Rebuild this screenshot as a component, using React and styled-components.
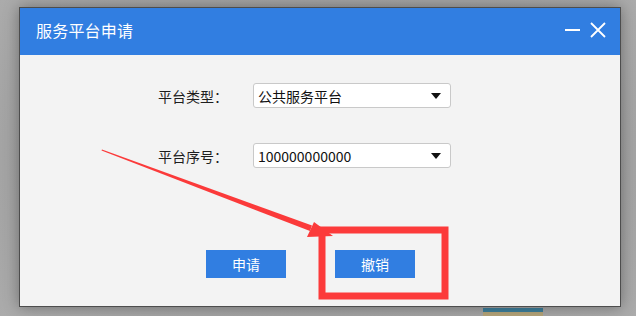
import React from "react";
import styled, { createGlobalStyle } from "styled-components";

const GlobalStyle = createGlobalStyle`
  html, body {
    margin: 0;
    padding: 0;
    background: #a7a7a7;
    font-family: "Noto Sans CJK SC", "Noto Sans", sans-serif;
  }
`;

const Page = styled.div`
  position: relative;
  width: 636px;
  height: 316px;
  overflow: hidden;
  padding: 7px 0 0 19px;
  box-sizing: border-box;
  background: radial-gradient(ellipse at 50% 50%, #8f8f8f 0%, #a4a4a4 70%, #ababab 100%);
`;

const Dialog = styled.div`
  width: 602px;
  height: 300px;
  box-sizing: border-box;
  border: 1px solid #4d4d4d;
  background: #f3f3f3;
  box-shadow: 0 0 14px rgba(0, 0, 0, 0.35);
  display: flex;
  flex-direction: column;
  position: relative;
  z-index: 1;
`;

const TitleBar = styled.div`
  height: 47px;
  background: #317ee1;
  display: flex;
  align-items: center;
  padding: 0 14px 0 16px;
  color: #fff;
`;

const Title = styled.div`
  flex: 1;
  font-size: 16px;
  letter-spacing: 0.2px;
  margin-top: -3px;
`;

const Controls = styled.div`
  display: flex;
  align-items: center;
  gap: 10px;
  margin-top: -3px;
`;

const Body = styled.div`
  flex: 1;
  display: flex;
  flex-direction: column;
  padding: 28px 0 0 138px;
`;

const Row = styled.div`
  display: flex;
  align-items: center;
  height: 25px;
  margin-bottom: ${(p) => p.$gap}px;
`;

const Label = styled.div`
  width: 95px;
  font-size: 14px;
  color: #1e1e1e;
`;

const Select = styled.div`
  width: 198px;
  height: 25px;
  box-sizing: border-box;
  border: 1px solid #c9c9c9;
  border-radius: 3px;
  background: #fff;
  display: flex;
  align-items: center;
  padding: 0 9px 0 4px;
  font-size: 14px;
  color: #111;
`;

const Value = styled.span`
  flex: 1;
`;

const Caret = styled.span`
  width: 0;
  height: 0;
  border-left: 5px solid transparent;
  border-right: 5px solid transparent;
  border-top: 6px solid #111;
`;

const Actions = styled.div`
  display: flex;
  gap: 49px;
  margin-left: 48px;
`;

const Button = styled.button`
  width: 80px;
  height: 28px;
  border: none;
  background: #317ee1;
  color: #fff;
  font-family: inherit;
  font-size: 14px;
  padding: 0;
`;

const Peek = styled.div`
  margin: 1px 0 0 464px;
  width: 60px;
  height: 8px;
  background: linear-gradient(#3d7f9c 0 4px, #b6a57a 4px);
  position: relative;
`;

const Overlay = styled.svg`
  position: absolute;
  left: 0;
  top: 0;
  width: 636px;
  height: 316px;
  z-index: 2;
  pointer-events: none;
`;

const App = () => {
  return (
    <Page>
      <GlobalStyle />
      <Dialog>
        <TitleBar>
          <Title>服务平台申请</Title>
          <Controls>
            <svg width="15" height="16" viewBox="0 0 15 16">
              <rect x="0" y="7" width="15" height="2" fill="#fff" />
            </svg>
            <svg width="16" height="16" viewBox="0 0 16 16">
              <path d="M1 1 L15 15 M15 1 L1 15" stroke="#fff" strokeWidth="1.8" />
            </svg>
          </Controls>
        </TitleBar>
        <Body>
          <Row $gap={35}>
            <Label>平台类型：</Label>
            <Select>
              <Value>公共服务平台</Value>
              <Caret />
            </Select>
          </Row>
          <Row $gap={82}>
            <Label>平台序号：</Label>
            <Select>
              <Value>100000000000</Value>
              <Caret />
            </Select>
          </Row>
          <Actions>
            <Button>申请</Button>
            <Button>撤销</Button>
          </Actions>
        </Body>
      </Dialog>
      <Peek />
      <Overlay viewBox="0 0 636 316">
        <polygon points="102,149.5 312,225.5 310,231 101.5,150.5" fill="#fb3a3a" />
        <polygon points="314,222 333,236 307,237" fill="#fb3a3a" />
        <rect x="322" y="230" width="123" height="66" fill="none" stroke="#fc3a3a" strokeWidth="7" />
      </Overlay>
    </Page>
  );
};

export default App;
